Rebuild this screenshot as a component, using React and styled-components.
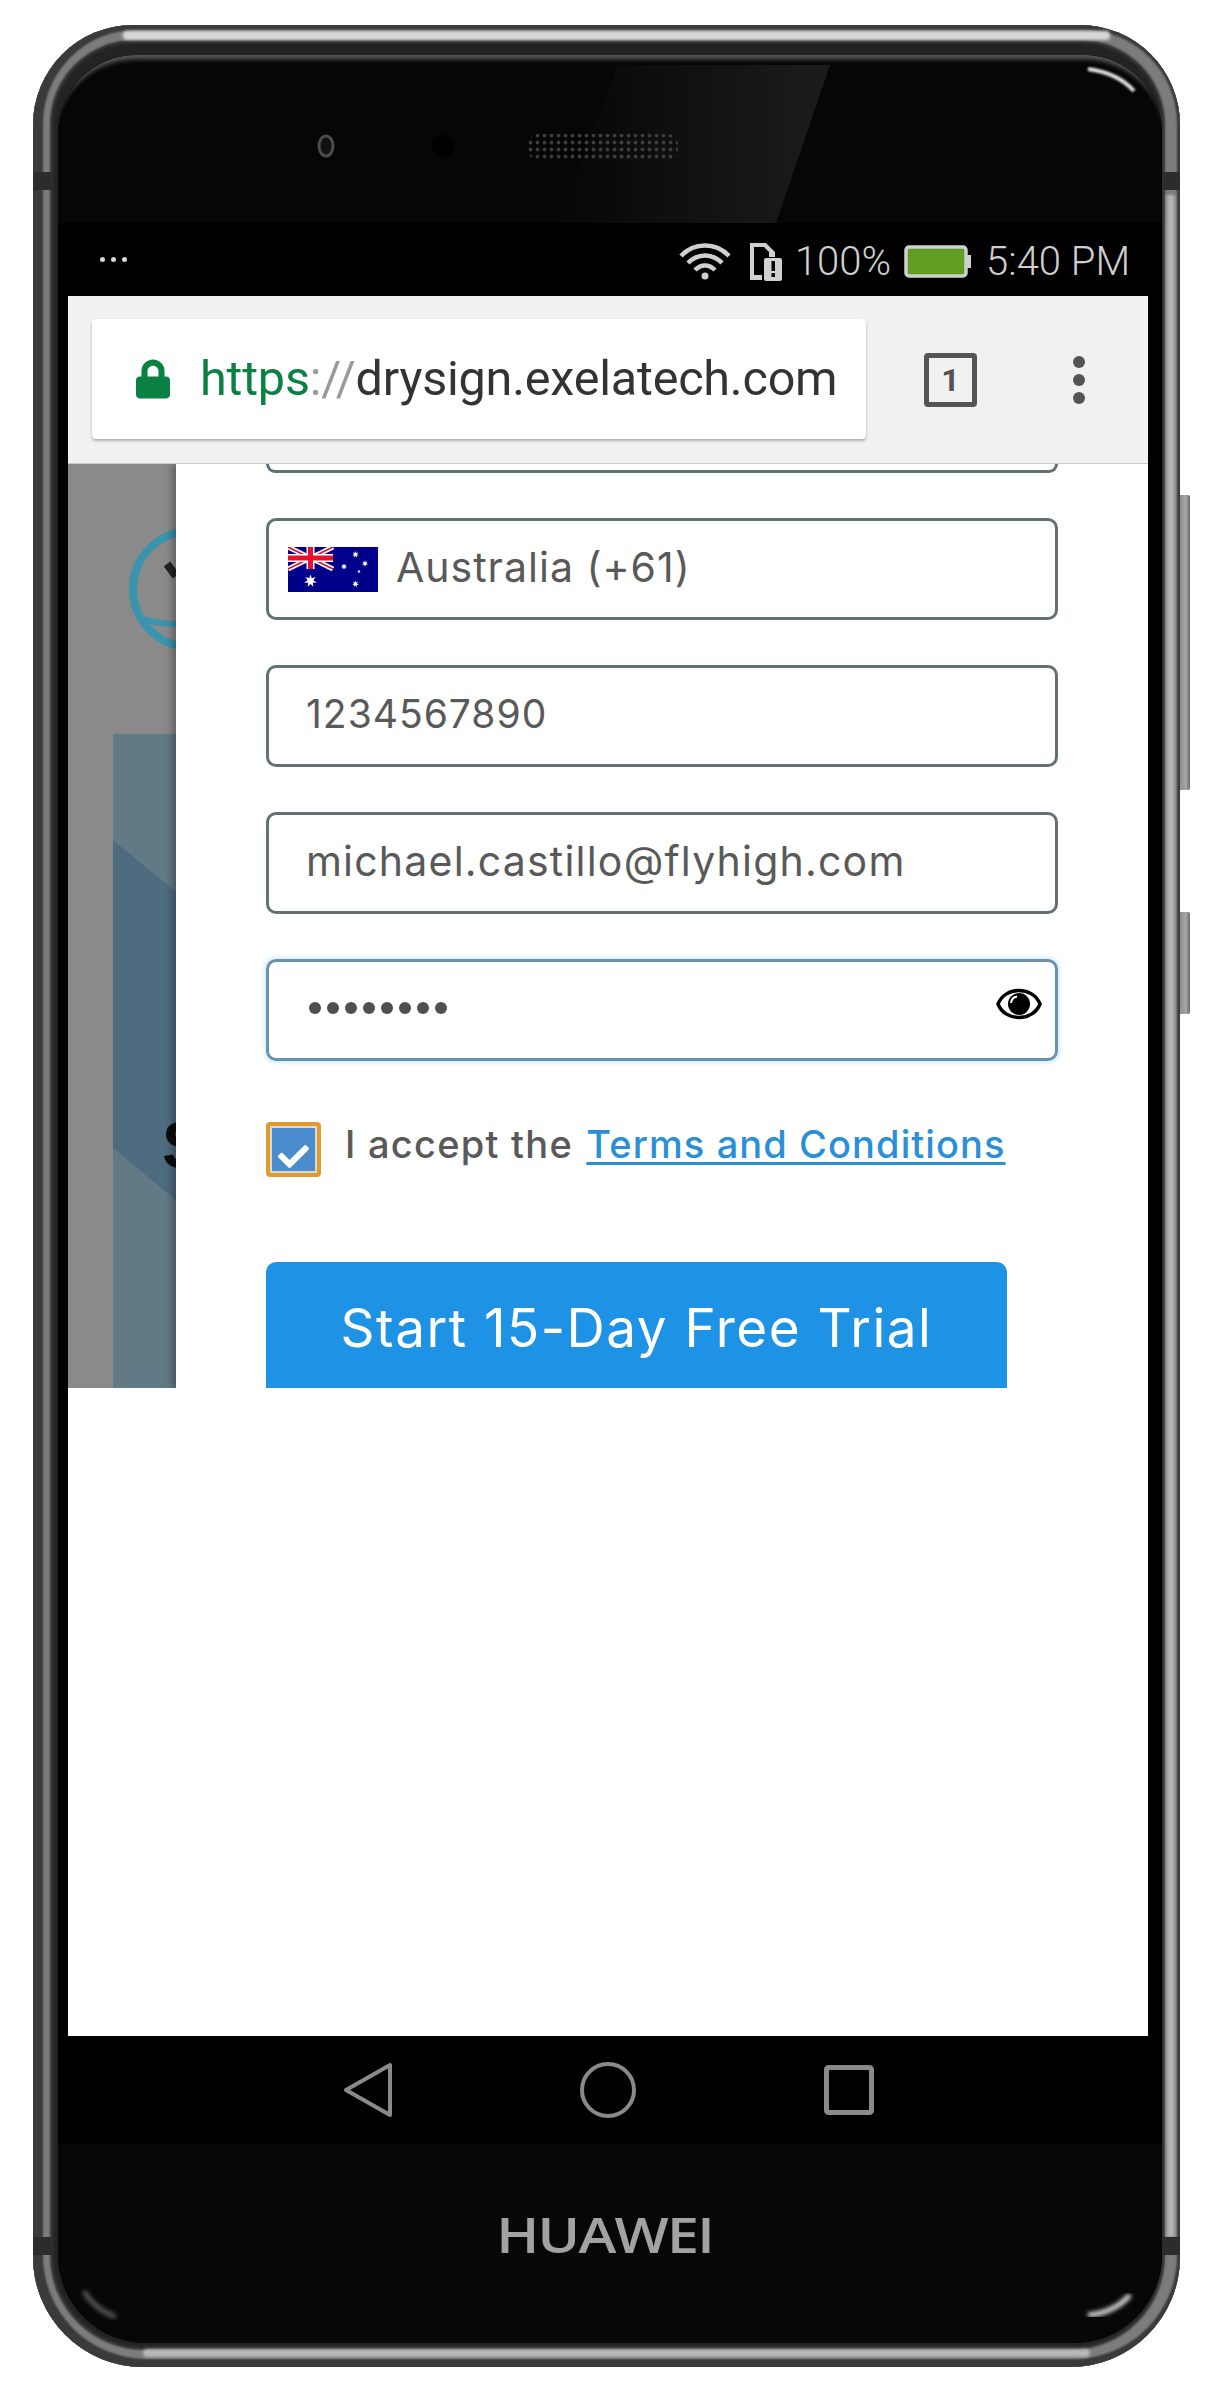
import React from 'react';
import styled, { createGlobalStyle } from 'styled-components';
import { FaCheck, FaLock } from 'react-icons/fa';

const Global = createGlobalStyle`
  html, body {
    margin: 0;
    background: #fff;
  }
  * {
    box-sizing: border-box;
  }
`;

const Page = styled.div`
  width: 1217px;
  height: 2397px;
  padding: 25px 0 0 33px;
  overflow: hidden;
  background: #fff;
`;

const Shell = styled.div`
  position: relative;
  width: 1147px;
  height: 2342px;
  padding: 30px 18px 24px 25px;
  border-radius: 100px 100px 110px 110px;
  background: #232323;
  box-shadow:
    inset 3.5px -1.5px 2px 6.5px #3a3a3a,
    inset 1px -1px 2px 16px #7c7c7c,
    inset 1px -1px 3px 19px #363636;
`;

const Rail = styled.div`
  position: absolute;
  left: ${p => p.$left}px;
  right: ${p => p.$right}px;
  top: ${p => p.$top}px;
  height: ${p => p.$height}px;
  border-radius: 4px;
  background: ${p => p.$color};
  filter: blur(1.5px);
`;

const SideRail = styled.div`
  position: absolute;
  right: 4px;
  top: 170px;
  bottom: 130px;
  width: 10px;
  background: linear-gradient(90deg, #9a9a9a, #bdbdbd 50%, #8a8a8a);
  filter: blur(1px);
`;

const SideKey = styled.div`
  position: absolute;
  right: -10px;
  top: ${p => p.$top}px;
  width: 10px;
  height: ${p => p.$height}px;
  border-radius: 0 2px 2px 0;
  background: linear-gradient(90deg, #8c8c8c, #a8a8a8 60%, #666);
`;

const Antenna = styled.div`
  position: absolute;
  ${p => p.$side}: 0;
  top: ${p => p.$top}px;
  width: 19px;
  height: 18px;
  background: #2c2c2c;
`;

const Bezel = styled.div`
  position: relative;
  display: flex;
  flex-direction: column;
  height: 100%;
  padding: 0 14px 0 10px;
  border-radius: 78px 78px 88px 88px;
  background: #000;
  overflow: hidden;
`;

const TopBezel = styled.div`
  height: 168px;
  margin: 0 -14px 0 -10px;
  background: #060606;
  border-radius: 78px 78px 0 0;
  box-shadow: inset 0 9px 5px -5px #5c5c5c;
`;

const FullDrawing = styled.svg`
  display: block;
  width: 100%;
  height: 100%;
`;

const StatusBar = styled.div`
  display: flex;
  align-items: center;
  flex: 0 0 73px;
  padding: 4px 18px 0 32px;
  color: #cfcfcf;
  font: 300 40px/1 'Roboto', sans-serif;
`;

const StatusDots = styled.div`
  display: flex;
  gap: 6px;
  margin: -4px auto 0 0;
  > i {
    width: 5px;
    height: 5px;
    border-radius: 50%;
    background: #d8d8d8;
  }
`;

const StatusText = styled.span`
  margin-left: ${p => p.$gap}px;
`;

const StatusIcon = styled.svg`
  display: block;
  margin-left: ${p => p.$gap || 0}px;
  flex: none;
`;

const ChromeBar = styled.div`
  display: flex;
  align-items: center;
  flex: 0 0 168px;
  padding: 0 0 0 24px;
  background: #f1f1f1;
  border-bottom: 1px solid #c9c9c9;
`;

const UrlBox = styled.div`
  display: flex;
  align-items: center;
  width: 774px;
  height: 120px;
  margin-top: -1px;
  padding-left: 44px;
  border-radius: 4px;
  background: #fff;
  box-shadow: 0 2px 3px rgba(0, 0, 0, 0.28);
`;

const LockIcon = styled(FaLock)`
  width: 34px;
  height: 42px;
  color: #0b8043;
  flex: none;
`;

const Url = styled.div`
  margin-left: 30px;
  color: #333;
  font: 48.5px/1 'Roboto', sans-serif;
  white-space: nowrap;
  letter-spacing: -0.2px;
`;

const UrlPart = styled.span`
  color: ${p => p.$color};
`;

const TabCount = styled.div`
  display: flex;
  align-items: center;
  justify-content: center;
  width: 53px;
  height: 54px;
  margin: 0 0 0 58px;
  border: 5px solid #545454;
  border-radius: 4px;
  color: #545454;
  font: 700 32px/1 'Roboto', sans-serif;
`;

const Kebab = styled.div`
  display: flex;
  flex-direction: column;
  gap: 6px;
  margin-left: 96px;
  > i {
    width: 12px;
    height: 12px;
    border-radius: 50%;
    background: #545454;
  }
`;

const Screen = styled.div`
  display: flex;
  flex-direction: column;
  flex: 0 0 1572px;
  background: #fff;
`;

const Viewport = styled.div`
  display: flex;
  height: 924px;
  overflow: hidden;
`;

const Backdrop = styled.div`
  display: flex;
  flex-direction: column;
  flex: 0 0 108px;
  overflow: hidden;
  background: #8a8a8a;
`;

const BackdropLogo = styled.svg`
  display: block;
  flex: none;
  margin: 63px 0 0 61px;
`;

const BackdropPanel = styled.div`
  flex: 1;
  margin: 82px 0 0 45px;
  padding-top: 106px;
  overflow: hidden;
  background: #617a85;
`;

const BackdropBand = styled.div`
  height: 360px;
  padding: 272px 0 0 49px;
  clip-path: polygon(0 0, 100% 52px, 100% 100%, 0 308px);
  background: #4f6b80;
  color: #0c0c0c;
  font: 700 66px/1 'Liberation Sans', sans-serif;
`;

const Sheet = styled.div`
  position: relative;
  flex: 1;
  padding-left: 90px;
  background: #fff;
  box-shadow: -4px 0 7px rgba(0, 0, 0, 0.3);
  color: #595959;
  font-family: 'Inter', sans-serif;
`;

const Field = styled.div`
  display: flex;
  align-items: center;
  justify-content: space-between;
  width: 792px;
  height: 102px;
  margin-top: 45px;
  padding: 0 16px 0 ${p => p.$flag ? 19 : 37}px;
  border: 3px solid #637076;
  border-radius: 10px;
  white-space: nowrap;
`;

const CutField = styled(Field)`
  height: 9px;
  margin-top: 0;
  border-top: 0;
  border-radius: 0 0 10px 10px;
`;

const FocusField = styled(Field)`
  border-color: #6b92ad;
  box-shadow: 0 0 4px 2px #d5ecfc;
`;

const FieldLabel = styled.span`
  margin-left: 18px;
  margin-right: auto;
  margin-top: -5px;
  font-size: 41px;
  letter-spacing: 1px;
`;

const FieldValue = styled.span`
  margin-top: -5px;
  font-size: ${p => p.$size}px;
  letter-spacing: ${p => p.$spacing}px;
`;

const PasswordDots = styled.div`
  display: flex;
  gap: 6px;
  margin: -4px 0 0 3px;
  > i {
    width: 12px;
    height: 12px;
    border-radius: 50%;
    background: #4f4f4f;
  }
`;

const EyeIcon = styled.svg`
  display: block;
  margin: -12px -3px 0 0;
  flex: none;
`;

const TermsRow = styled.div`
  display: flex;
  align-items: flex-start;
  margin-top: 61px;
`;

const CheckBox = styled.div`
  display: flex;
  align-items: flex-end;
  justify-content: center;
  width: 55px;
  height: 55px;
  padding-bottom: 1px;
  border: 4px solid #e29a2c;
  border-radius: 4px;
  background: #4a8cce;
  box-shadow: inset 0 0 0 2px #d9d9d9;
  color: #fff;
  font-size: 31px;
`;

const TermsText = styled.div`
  margin: 0 0 0 24px;
  font-size: 38px;
  font-weight: 500;
  line-height: 44px;
  letter-spacing: 1.25px;
  white-space: nowrap;
`;

const TermsLink = styled.a`
  margin-left: 2px;
  color: #2b8fd8;
  letter-spacing: 1.1px;
  text-decoration: underline;
  text-decoration-thickness: 3px;
  text-underline-offset: 4px;
`;

const TrialButton = styled.div`
  display: flex;
  align-items: flex-start;
  justify-content: center;
  width: 741px;
  height: 160px;
  margin-top: 85px;
  padding-top: 34px;
  border-radius: 10px;
  background: #1e93e6;
  color: #fff;
  font-size: 53px;
  letter-spacing: 1.5px;
`;

const NavBar = styled.div`
  display: flex;
  align-items: center;
  justify-content: center;
  flex: 0 0 108px;
  background: #000;
`;

const NavIcon = styled.svg`
  display: block;
  margin-left: ${p => p.$gap || 0}px;
`;

const BottomBezel = styled.div`
  position: relative;
  display: flex;
  justify-content: center;
  flex: 1;
  margin: 0 -14px 0 -10px;
  padding: 65px 10px 0 0;
  background: #070707;
  border-radius: 0 0 88px 88px;
`;

const CornerGlints = styled.svg`
  position: absolute;
  left: 0;
  bottom: 0;
`;

const Brand = styled.div`
  height: 50px;
  color: #a2a2a2;
  font: 600 49px/50px 'Open Sans', sans-serif;
  letter-spacing: -1.5px;
  transform: scaleX(1.17);
`;

// seven pointed star for the flag
const starPoints = (cx, cy, r, n = 7) => {
  const pts = [];
  for (let i = 0; i < n * 2; i++) {
    const a = (Math.PI * i) / n - Math.PI / 2;
    const d = i % 2 ? r * 0.45 : r;
    pts.push(`${(cx + d * Math.cos(a)).toFixed(2)},${(cy + d * Math.sin(a)).toFixed(2)}`);
  }
  return pts.join(' ');
};

const AuFlag = () => (
  <svg width="90" height="45" viewBox="0 0 90 45" style={{ flex: 'none' }}>
    <rect width="90" height="45" fill="#00008b" />
    <path d="M0 0L45 22M45 0L0 22" stroke="#fff" strokeWidth="5" />
    <path d="M0 0L45 22M45 0L0 22" stroke="#e8112d" strokeWidth="1.6" />
    <path d="M22.5 0V22M0 11H45" stroke="#fff" strokeWidth="8" />
    <path d="M22.5 0V22M0 11H45" stroke="#e8112d" strokeWidth="5" />
    <g fill="#fff">
      <polygon points={starPoints(22.5, 34, 6.5)} />
      <polygon points={starPoints(67.5, 7.5, 3.4)} />
      <polygon points={starPoints(56, 19.5, 3.2)} />
      <polygon points={starPoints(77, 16.5, 3.2)} />
      <polygon points={starPoints(71, 24.5, 1.8, 5)} />
      <polygon points={starPoints(67.5, 37, 3.4)} />
    </g>
  </svg>
);

export default function App() {
  return (
    <Page>
      <Global />
      <Shell>
        <Rail $left={90} $right={70} $top={6} $height={9} $color="#d8d8d8" />
        <Rail $left={110} $right={90} $top={2324} $height={8} $color="#b8b8b8" />
        <SideRail />
        <SideKey $top={470} $height={295} />
        <SideKey $top={887} $height={102} />
        <Antenna $side="left" $top={147} />
        <Antenna $side="right" $top={147} />
        <Antenna $side="left" $top={2212} />
        <Antenna $side="right" $top={2212} />
        <Bezel>
          <TopBezel>
            <FullDrawing viewBox="0 0 1104 168">
              <defs>
                <linearGradient id="glare" x1="0" x2="1" y1="0" y2="0">
                  <stop offset="0" stopColor="#060606" />
                  <stop offset="1" stopColor="#1c1c1c" />
                </linearGradient>
                <pattern id="mesh" width="7" height="7" patternUnits="userSpaceOnUse">
                  <circle cx="3.500" cy="3.500" r="1.900" fill="#3c3c3c" />
                </pattern>
                <filter id="soft"><feGaussianBlur stdDeviation="1.2" /></filter>
              </defs>
              <path d="M560 10H772L718 168H500Z" fill="url(#glare)" />
              <ellipse cx="268" cy="91" rx="7" ry="10" fill="#111" stroke="#4c4c4c" strokeWidth="3" />
              <circle cx="385" cy="91" r="11" fill="#000" />
              <rect x="470" y="79" width="150" height="26" rx="10" fill="url(#mesh)" />
              <path d="M1030 14Q1060 18 1076 36" fill="none" stroke="#e0e0e0" strokeWidth="4" filter="url(#soft)" />
            </FullDrawing>
          </TopBezel>
          <StatusBar>
            <StatusDots><i /><i /><i /></StatusDots>
            <StatusIcon width="52" height="38" viewBox="0 0 52 38" fill="none" stroke="#d0d0d0" strokeWidth="4.5">
              <path d="M2 13C15 -1 37 -1 50 13" />
              <path d="M9 20C19 10 33 10 43 20" />
              <path d="M16 27C22 21 30 21 36 27" />
              <circle cx="26" cy="33" r="3.5" fill="#d0d0d0" stroke="none" />
            </StatusIcon>
            <StatusIcon $gap={17} width="34" height="38" viewBox="0 0 34 38" fill="#d0d0d0">
              <path fillRule="evenodd" d="M2 0H18L27 9V14H21V9L16 4H6V32H14V37H2Z" />
              <rect x="16" y="15" width="18" height="23" rx="2" />
              <rect x="23.500" y="18" width="3.500" height="10" fill="#000" />
              <rect x="23.500" y="30" width="3.500" height="4" fill="#000" />
            </StatusIcon>
            <StatusText $gap={13}>100%</StatusText>
            <StatusIcon $gap={13} width="68" height="33" viewBox="0 0 68 33">
              <rect x="2" y="2" width="60" height="29" rx="3" fill="#5f9e23" stroke="#cfcfcf" strokeWidth="3.500" />
              <rect x="63" y="10" width="4" height="13" fill="#cfcfcf" />
            </StatusIcon>
            <StatusText $gap={14}>5:40 PM</StatusText>
          </StatusBar>
          <ChromeBar>
            <UrlBox>
              <LockIcon />
              <Url>
                <UrlPart $color="#0b8043">https</UrlPart>
                <UrlPart $color="#9a9a9a">://</UrlPart>
                drysign.exelatech.com
              </Url>
            </UrlBox>
            <TabCount>1</TabCount>
            <Kebab><i /><i /><i /></Kebab>
          </ChromeBar>
          <Screen>
            <Viewport>
              <Backdrop>
                <BackdropLogo width="47" height="125" viewBox="0 0 47 125" fill="none" stroke="#3a94ad" strokeWidth="8">
                  <circle cx="62" cy="62" r="58" />
                  <path d="M9 90C22 96 35 97 47 97" strokeWidth="6" />
                  <path d="M38 37L47 49" stroke="#222" />
                </BackdropLogo>
                <BackdropPanel>
                  <BackdropBand>S</BackdropBand>
                </BackdropPanel>
              </Backdrop>
              <Sheet>
                <CutField />
                <Field $flag>
                  <AuFlag />
                  <FieldLabel>Australia (+61)</FieldLabel>
                </Field>
                <Field><FieldValue $size={39} $spacing={1}>1234567890</FieldValue></Field>
                <Field><FieldValue $size={41} $spacing={1.2}>michael.castillo@flyhigh.com</FieldValue></Field>
                <FocusField>
                  <PasswordDots><i /><i /><i /><i /><i /><i /><i /><i /></PasswordDots>
                  <EyeIcon width="46" height="32" viewBox="0 0 46 32">
                    <path d="M2 16C9 -2 37 -2 44 16C37 34 9 34 2 16Z" fill="#fff" stroke="#000" strokeWidth="3.500" />
                    <circle cx="23" cy="16" r="11" fill="#000" />
                    <path d="M15 15C15.500 11 18 9 21 8.500" fill="none" stroke="#fff" strokeWidth="2" />
                  </EyeIcon>
                </FocusField>
                <TermsRow>
                  <CheckBox><FaCheck /></CheckBox>
                  <TermsText>I accept the <TermsLink href="#">Terms and Conditions</TermsLink></TermsText>
                </TermsRow>
                <TrialButton>Start 15-Day Free Trial</TrialButton>
              </Sheet>
            </Viewport>
          </Screen>
          <NavBar>
            <NavIcon width="50" height="56" viewBox="0 0 50 56" fill="none" stroke="#8a8a8a" strokeWidth="4" strokeLinejoin="round">
              <path d="M47 3V53L3 28Z" />
            </NavIcon>
            <NavIcon $gap={187} width="56" height="56" viewBox="0 0 56 56" fill="none" stroke="#8a8a8a" strokeWidth="4">
              <circle cx="28" cy="28" r="26" />
            </NavIcon>
            <NavIcon $gap={188} width="50" height="50" viewBox="0 0 50 50" fill="none" stroke="#8a8a8a" strokeWidth="5">
              <rect x="2.500" y="2.500" width="45" height="45" rx="2" />
            </NavIcon>
          </NavBar>
          <BottomBezel>
            <Brand>HUAWEI</Brand>
            <CornerGlints width="1104" height="60" viewBox="0 0 1104 60" fill="none" strokeWidth="5">
              <defs>
                <filter id="softer"><feGaussianBlur stdDeviation="2" /></filter>
              </defs>
              <path d="M26 8Q36 26 58 34" stroke="#555" filter="url(#softer)" />
              <path d="M1072 12Q1056 30 1030 32" stroke="#d8d8d8" filter="url(#softer)" />
            </CornerGlints>
          </BottomBezel>
        </Bezel>
      </Shell>
    </Page>
  );
}
